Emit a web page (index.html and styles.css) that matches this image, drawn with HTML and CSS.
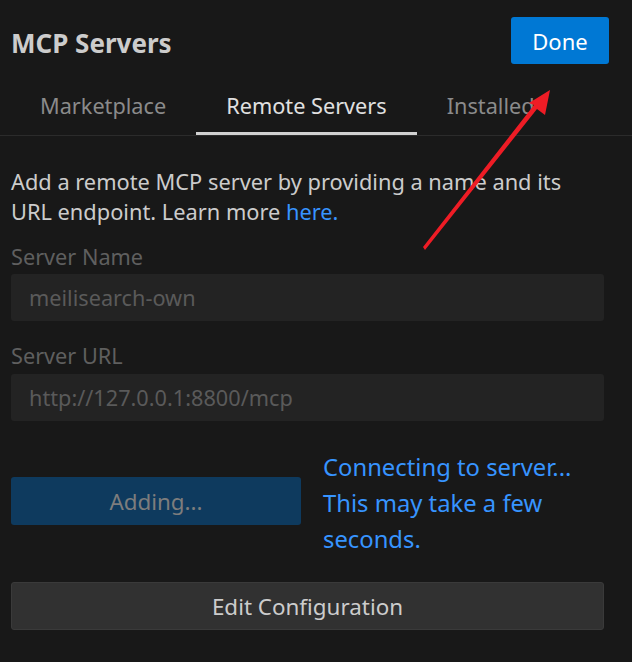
FILE: index.html
```html
<!DOCTYPE html>
<html>
<head>
<meta charset="utf-8">
<link rel="stylesheet" href="styles.css">
</head>
<body>
<div class="panel">
  <header class="head">
    <h1 class="title">MCP Servers</h1>
    <button class="done">Done</button>
  </header>
  <nav class="tabs">
    <div class="tab">Marketplace</div>
    <div class="tab active">Remote Servers</div>
    <div class="tab">Installed</div>
  </nav>
  <main class="body">
    <p class="intro">Add a remote MCP server by providing a name and its URL endpoint. Learn more <a class="link">here.</a></p>
    <div class="field">
      <label class="label">Server Name</label>
      <div class="input">meilisearch-own</div>
    </div>
    <div class="field">
      <label class="label">Server URL</label>
      <div class="input">http://127.0.0.1:8800/mcp</div>
    </div>
    <div class="action-row">
      <button class="adding">Adding...</button>
      <div class="status">Connecting to server... This may take a few seconds.</div>
    </div>
    <button class="edit">Edit Configuration</button>
  </main>
  <svg class="arrow" width="632" height="662" viewBox="0 0 632 662">
    <polygon fill="#ee1c25" points="423,247 425,250 537,109 545,115 550,90 529,103 534,105"/>
  </svg>
</div>
</body>
</html>
```
FILE: styles.css
```css
* { box-sizing: border-box; }
html, body { margin: 0; padding: 0; background: #181818; }
body {
  font-family: "Noto Sans", "Open Sans", sans-serif;
  color: #cccccc;
  width: 632px;
  height: 662px;
  overflow: hidden;
}
.panel { position: relative; height: 662px; }
.head {
  display: flex;
  justify-content: space-between;
  align-items: flex-start;
  padding: 17px 23px 0 11px;
  height: 64px;
}
.title {
  margin: 0;
  font-size: 26px;
  line-height: 52px;
  font-weight: 700;
  color: #cccccc;
}
.done {
  width: 98px;
  height: 47px;
  background: #0078d4;
  color: #ffffff;
  border: none;
  border-radius: 3px;
  font-family: inherit;
  font-size: 22px;
  padding: 0;
}
.tabs {
  display: flex;
  padding-left: 10px;
  border-bottom: 1px solid #2b2b2b;
  height: 72px;
}
.tab {
  height: 71px;
  padding: 29px 30px 0;
  font-size: 21.7px;
  line-height: 26px;
  color: #8b8b8b;
}
.tab.active {
  color: #e0e0e0;
  border-bottom: 3px solid #d0d0d0;
}
.body { padding: 0 28px 0 11px; }
.intro {
  margin: 31px 0 0;
  font-size: 21.8px;
  line-height: 30px;
  color: #cccccc;
}
.link { color: #3794ff; }
.field { margin-top: 15px; }
.label {
  display: block;
  font-size: 21.7px;
  line-height: 30px;
  color: #5f5f5f;
  margin-bottom: 2px;
}
.input {
  height: 47px;
  background: #232323;
  border-radius: 3px;
  padding: 0 18px;
  font-size: 21.7px;
  line-height: 47px;
  color: #5a5a5a;
}
.field + .field { margin-top: 20px; }
.field + .field .label { margin-bottom: 3px; }
.action-row {
  display: flex;
  align-items: center;
  gap: 22px;
  margin-top: 28px;
}
.adding {
  width: 290px;
  height: 48px;
  flex: none;
  margin-bottom: 4px;
  background: #0e3a5e;
  color: #7d7d7d;
  border: none;
  border-radius: 3px;
  font-family: inherit;
  font-size: 22.4px;
}
.status {
  font-size: 23.8px;
  line-height: 36px;
  color: #3794ff;
  width: 270px;
}
.edit {
  display: block;
  width: 593px;
  height: 48px;
  margin-top: 25px;
  background: #313131;
  border: 1px solid #3a3a3a;
  border-radius: 3px;
  color: #cccccc;
  font-family: inherit;
  font-size: 22.4px;
}
.arrow { position: absolute; left: 0; top: 0; pointer-events: none; }
```
